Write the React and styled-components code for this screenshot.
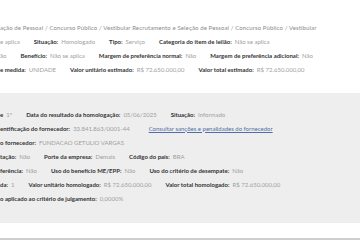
import React from "react";
import styled, { createGlobalStyle } from "styled-components";

const GlobalStyle = createGlobalStyle`
  body {
    margin: 0;
    background: #ffffff;
    font-family: "Lato", "Open Sans", sans-serif;
    overflow: hidden;
  }
`;

const Page = styled.div`
  width: 360px;
  height: 240px;
  overflow: hidden;
  display: flex;
  flex-direction: column;
`;

const ItemInfo = styled.div`
  display: flex;
  flex-direction: column;
  padding: 20px 0 17px;
`;

const ResultPanel = styled.div`
  display: flex;
  flex-direction: column;
  background: #eeeeee;
  padding: 14px 0 18px;
`;

const Row = styled.div`
  display: flex;
  gap: 14px;
  height: 14px;
  align-items: center;
  white-space: nowrap;
  font-size: 6px;
`;

const Path = styled.span`
  color: #8a8a8a;
  letter-spacing: 0.12px;
`;

const Field = styled.span`
  display: inline-flex;
  gap: 3px;
`;

const Label = styled.b`
  color: #333333;
  font-weight: 700;
`;

const Value = styled.span`
  color: #a0a0a0;
`;

const Link = styled.a`
  color: #4f6fa8;
  text-decoration: underline;
  margin-left: 5px;
`;

const Divider = styled.div`
  margin-top: 15px;
  height: 2px;
  background: #cfcfcf;
`;

const F = ({ l, v }) => (
  <Field>
    {l && <Label>{l}</Label>}
    {v && <Value>{v}</Value>}
  </Field>
);

export default function App() {
  return (
    <Page>
      <GlobalStyle />
      <ItemInfo>
        <Row>
          <Path>
            ação de Pessoal / Concurso Público / Vestibular Recrutamento e
            Seleção de Pessoal / Concurso Público / Vestibular
          </Path>
        </Row>
        <Row>
          <F v="e aplica" />
          <F l="Situação:" v="Homologado" />
          <F l="Tipo:" v="Serviço" />
          <F l="Categoria do item de leilão:" v="Não se aplica" />
        </Row>
        <Row>
          <F v="ão" />
          <F l="Benefício:" v="Não se aplica" />
          <F l="Margem de preferência normal:" v="Não" />
          <F l="Margem de preferência adicional:" v="Não" />
        </Row>
        <Row>
          <F l="e medida:" v="UNIDADE" />
          <F l="Valor unitário estimado:" v="R$ 72.650.000,00" />
          <F l="Valor total estimado:" v="R$ 72.650.000,00" />
        </Row>
      </ItemInfo>
      <ResultPanel>
        <Row>
          <F l="e" v="1º" />
          <F l="Data do resultado da homologação:" v="05/06/2025" />
          <F l="Situação:" v="Informado" />
        </Row>
        <Row>
          <F l="entificação do fornecedor:" v="33.841.863/0001-44" />
          <Link href="#">Consultar sanções e penalidades do fornecedor</Link>
        </Row>
        <Row>
          <F l="o fornecedor:" v="FUNDACAO GETULIO VARGAS" />
        </Row>
        <Row>
          <F l="tação:" v="Não" />
          <F l="Porte da empresa:" v="Demais" />
          <F l="Código do país:" v="BRA" />
        </Row>
        <Row>
          <F l="ferência:" v="Não" />
          <F l="Uso do benefício ME/EPP:" v="Não" />
          <F l="Uso do critério de desempate:" v="Não" />
        </Row>
        <Row>
          <F l="da:" v="1" />
          <F l="Valor unitário homologado:" v="R$ 72.650.000,00" />
          <F l="Valor total homologado:" v="R$ 72.650.000,00" />
        </Row>
        <Row>
          <F l="o aplicado ao critério de julgamento:" v="0,0000%" />
        </Row>
      </ResultPanel>
      <Divider />
    </Page>
  );
}
